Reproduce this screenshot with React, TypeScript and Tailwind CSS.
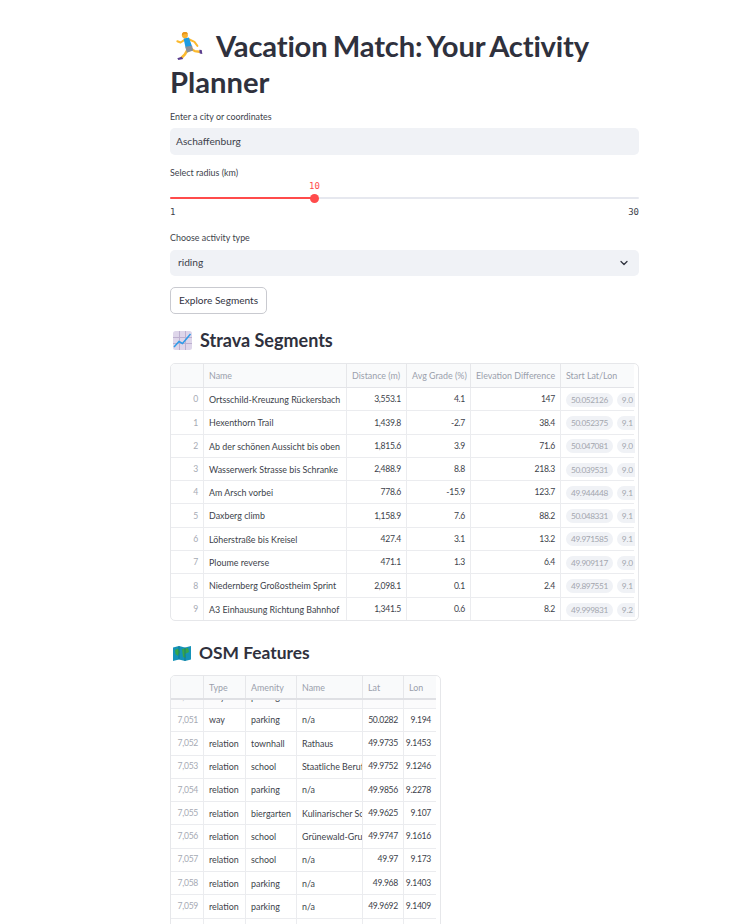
import { ChevronDown } from "lucide-react";

const font = { fontFamily: "Lato, 'Noto Sans', sans-serif" };

function Runner() {
  return (
    <svg viewBox="0 0 80 85" className="w-[27px] h-[28px] shrink-0" aria-hidden="true">
      <path d="M25 24 L13 32 L3 28" fill="none" stroke="#FBB92E" strokeWidth="6" strokeLinecap="round" strokeLinejoin="round" />
      <path d="M38 22 L55 30 L64 42" fill="none" stroke="#FBB92E" strokeWidth="6" strokeLinecap="round" strokeLinejoin="round" />
      <path d="M34 54 L26 68 L16 78" fill="none" stroke="#FBB92E" strokeWidth="8" strokeLinecap="round" strokeLinejoin="round" />
      <path d="M44 50 L56 58 L70 60" fill="none" stroke="#FBB92E" strokeWidth="7" strokeLinecap="round" strokeLinejoin="round" />
      <path d="M22 20 L38 17 L48 44 L28 47 Z" fill="#1D9BE2" />
      <path d="M27 45 L48 42 L51 56 L32 63 Z" fill="#8A8F98" />
      <circle cx="26" cy="10" r="9" fill="#F9B233" />
      <path d="M17 10 A9 9 0 0 1 35 7 L26 6 Z" fill="#E9971C" />
      <path d="M3 80 L16 75 L21 82 L6 85 Z" fill="#5B3E8E" />
      <path d="M70 54 L77 55 L79 67 L71 65 Z" fill="#5B3E8E" />
    </svg>
  );
}

function ChartIcon() {
  return (
    <svg viewBox="0 0 19 19" className="w-[19px] h-[19px] shrink-0" aria-hidden="true">
      <rect x="0" y="0" width="19" height="19" rx="2.5" fill="#DED6EA" />
      <path d="M6.5 0V19M12.5 0V19M0 6.5H19M0 12.5H19" stroke="#BDB0D0" strokeWidth="1" />
      <path d="M1 16 L6 10.5 L9.5 12.5 L17.5 3" fill="none" stroke="#2F9BE8" strokeWidth="1.5" />
    </svg>
  );
}

function MapIcon() {
  return (
    <svg viewBox="0 0 18 15" className="w-[18px] h-[15px] shrink-0" aria-hidden="true">
      <path d="M0 1.5 L6 0 L12 1.5 L18 0 V13.5 L12 15 L6 13.5 L0 15 Z" fill="#1593B8" />
      <path d="M2 4 L5 2.5 L7 6 L5 10 L2.5 8 Z" fill="#37A64A" />
      <path d="M9 3 L15 2 L16 6 L12 8 L13 12 L10 11 Z" fill="#37A64A" />
      <path d="M6 0V13.5M12 1.5V15" stroke="#0C6E8C" strokeWidth="0.7" />
    </svg>
  );
}

const stravaCols = "grid grid-cols-[33px_143px_60px_64px_90px_74px] [&>div]:pt-[1px]";
const osmCols = "grid grid-cols-[33px_42px_51px_66px_41px_32px]";

const stravaRows = [
  ["0", "Ortsschild-Kreuzung Rückersbach", "3,553.1", "4.1", "147", "50.052126", "9.0"],
  ["1", "Hexenthorn Trail", "1,439.8", "-2.7", "38.4", "50.052375", "9.1"],
  ["2", "Ab der schönen Aussicht bis oben", "1,815.6", "3.9", "71.6", "50.047081", "9.0"],
  ["3", "Wasserwerk Strasse bis Schranke", "2,488.9", "8.8", "218.3", "50.039531", "9.0"],
  ["4", "Am Arsch vorbei", "778.6", "-15.9", "123.7", "49.944448", "9.1"],
  ["5", "Daxberg climb", "1,158.9", "7.6", "88.2", "50.048331", "9.1"],
  ["6", "Löherstraße bis Kreisel", "427.4", "3.1", "13.2", "49.971585", "9.1"],
  ["7", "Ploume reverse", "471.1", "1.3", "6.4", "49.909117", "9.0"],
  ["8", "Niedernberg Großostheim Sprint", "2,098.1", "0.1", "2.4", "49.897551", "9.1"],
  ["9", "A3 Einhausung Richtung Bahnhof", "1,341.5", "0.6", "8.2", "49.999831", "9.2"],
];

const osmRows = [
  ["7,051", "way", "parking", "n/a", "50.0282", "9.194"],
  ["7,052", "relation", "townhall", "Rathaus", "49.9735", "9.1453"],
  ["7,053", "relation", "school", "Staatliche Berufsschule", "49.9752", "9.1246"],
  ["7,054", "relation", "parking", "n/a", "49.9856", "9.2278"],
  ["7,055", "relation", "biergarten", "Kulinarischer Schlossgarten", "49.9625", "9.107"],
  ["7,056", "relation", "school", "Grünewald-Grundschule", "49.9747", "9.1616"],
  ["7,057", "relation", "school", "n/a", "49.97", "9.173"],
  ["7,058", "relation", "parking", "n/a", "49.968", "9.1403"],
  ["7,059", "relation", "parking", "n/a", "49.9692", "9.1409"],
];

const cell = "flex items-center border-r border-[#ebecef] px-[5px] overflow-hidden whitespace-nowrap text-[8.9px] text-[#3d3f4b]";
const numCell = "flex items-center justify-end border-r border-[#ebecef] pl-[2px] pr-[5px] overflow-hidden whitespace-nowrap text-[8.6px] tracking-[-0.3px] text-[#3d3f4b]";
const indexCell = "flex items-center justify-end border-r border-[#ebecef] pl-[2px] pr-[5px] overflow-hidden whitespace-nowrap text-[8.6px] tracking-[-0.3px] text-[#a6aab4]";
const headCell = "flex items-center border-r border-[#e6e7ea] px-[5px] overflow-hidden whitespace-nowrap text-[8.9px] text-[#9a9fac]";

function Label({ children }: { children: string }) {
  return <div className="h-[14px] leading-[14px] text-[8.9px] text-[#3d3f4b]">{children}</div>;
}

function Chip({ children }: { children: string }) {
  return (
    <span className="shrink-0 h-[14px] leading-[14px] rounded-full bg-[#f0f2f6] px-[5px] text-[8.3px] tracking-[-0.4px] text-[#a3a6ae]">
      {children}
    </span>
  );
}

function Tail({ children }: { children?: string }) {
  return <span className="block leading-[12px] -mt-[9px]">{children}</span>;
}

export default function App() {
  return (
    <div className="h-[924px] overflow-hidden bg-white text-[#31333f]" style={font}>
      <div className="ml-[170px] w-[469px] pt-[28px]">
        <h1 className="text-[29.2px] leading-[36px] font-bold text-[#2f313d]">
          <span className="inline-flex items-center gap-[13px] align-top h-[36px] [word-spacing:-1.5px] tracking-[-0.2px]">
            <span className="ml-[6px] flex"><Runner /></span>
            <span>Vacation Match: Your Activity</span>
          </span>
          <br />
          Planner
        </h1>

        <div className="mt-[10px]"><Label>Enter a city or coordinates</Label></div>
        <div className="mt-[4px] h-[27px] rounded-[5px] bg-[#f0f2f6] px-[6px] flex items-center text-[10.2px] text-[#3d3f4b]">
          Aschaffenburg
        </div>

        <div className="mt-[11px]"><Label>Select radius (km)</Label></div>
        <div className="h-[12px] leading-[12px] pl-[139px] text-[9px] text-[#ff4b4b] font-['DejaVu_Sans_Mono',monospace]">10</div>
        <div className="relative mt-[5px] h-[2px] bg-[#e6e8ef] rounded-full">
          <div className="h-[2px] w-[145px] bg-[#ff4b4b] rounded-l-full" />
          <div className="absolute left-[140px] top-[-3.5px] w-[9px] h-[9px] rounded-full bg-[#ff4b4b]" />
        </div>
        <div className="mt-[7px] flex justify-between h-[12px] leading-[12px] text-[9px] text-[#3d3f4b] font-['DejaVu_Sans_Mono',monospace]">
          <span>1</span>
          <span>30</span>
        </div>

        <div className="mt-[13px]"><Label>Choose activity type</Label></div>
        <div className="mt-[5px] h-[26px] rounded-[5px] bg-[#f0f2f6] pl-[8px] pr-[9px] flex items-center justify-between text-[10.2px] text-[#3d3f4b]">
          <span>riding</span>
          <ChevronDown size={12} strokeWidth={2.5} color="#31333f" />
        </div>

        <button className="mt-[11px] h-[27px] w-[97px] rounded-[5px] border border-[#c9cad0] bg-white text-[10.1px] text-[#31333f] flex items-center justify-center">
          Explore Segments
        </button>

        <h2 className="mt-[14px] h-[24px] flex items-center gap-[8px] pl-[3px] text-[18px] font-bold text-[#2f313d]">
          <ChartIcon />
          Strava Segments
        </h2>

        <div className="mt-[11px] h-[258px] rounded-[5px] border border-[#e6e7ea] overflow-hidden pr-[4px]">
          <div className={`${stravaCols} h-[24px] bg-[#f9fafb] border-b border-[#e3e4e8]`}>
            <div className={headCell} />
            <div className={headCell}>Name</div>
            <div className={headCell}>Distance (m)</div>
            <div className={headCell}>Avg Grade (%)</div>
            <div className={headCell}>Elevation Difference</div>
            <div className={`${headCell} border-r-0`}>Start Lat/Lon</div>
          </div>
          {stravaRows.map((r) => (
            <div key={r[0]} className={`${stravaCols} h-[23.3px] border-b border-[#ebecef] last:border-b-0`}>
              <div className={indexCell}>{r[0]}</div>
              <div className={cell}>{r[1]}</div>
              <div className={numCell}>{r[2]}</div>
              <div className={numCell}>{r[3]}</div>
              <div className={numCell}>{r[4]}</div>
              <div className={`${cell} border-r-0 gap-[4px] px-[4px]`}>
                <Chip>{r[5]}</Chip>
                <span className="shrink-0 w-[30px] h-[14px] leading-[14px] rounded-full bg-[#f0f2f6] px-[5px] text-[8.3px] tracking-[-0.2px] text-[#a3a6ae]">
                  {r[6]}
                </span>
              </div>
            </div>
          ))}
        </div>

        <h2 className="mt-[20px] h-[24px] flex items-center gap-[8px] pl-[3px] text-[17.4px] font-bold text-[#2f313d]">
          <MapIcon />
          OSM Features
        </h2>

        <div className="mt-[10px] w-[271px] h-[300px] rounded-t-[5px] border border-[#e6e7ea] overflow-hidden pr-[4px]">
          <div className={`${osmCols} h-[24px] bg-[#f9fafb] border-b-2 border-[#dfe0e4] [&>div]:pt-[1px]`}>
            <div className={headCell} />
            <div className={headCell}>Type</div>
            <div className={headCell}>Amenity</div>
            <div className={headCell}>Name</div>
            <div className={headCell}>Lat</div>
            <div className={`${headCell} border-r-0`}>Lon</div>
          </div>
          <div className={`${osmCols} h-[8px] bg-[#fbfbfc] overflow-hidden`}>
            <div className={`${indexCell} items-start`}><Tail>7,050</Tail></div>
            <div className={`${cell} items-start`}><Tail>way</Tail></div>
            <div className={`${cell} items-start`}><Tail>parking</Tail></div>
            <div className={`${cell} items-start`}><Tail /></div>
            <div className={`${numCell} items-start`}><Tail /></div>
            <div className={`${numCell} items-start border-r-0`}><Tail /></div>
          </div>
          {osmRows.map((r) => (
            <div key={r[0]} className={`${osmCols} h-[23.3px] border-t border-[#ebecef]`}>
              <div className={indexCell}>{r[0]}</div>
              <div className={cell}>{r[1]}</div>
              <div className={cell}>{r[2]}</div>
              <div className={cell}>{r[3]}</div>
              <div className={numCell}>{r[4]}</div>
              <div className={`${numCell} border-r-0`}>{r[5]}</div>
            </div>
          ))}
          <div className={`${osmCols} h-[23.3px] border-t border-[#ebecef]`}>
            <div className={cell} />
            <div className={cell} />
            <div className={cell} />
            <div className={cell} />
            <div className={cell} />
            <div className={`${cell} border-r-0`} />
          </div>
        </div>
      </div>
    </div>
  );
}
